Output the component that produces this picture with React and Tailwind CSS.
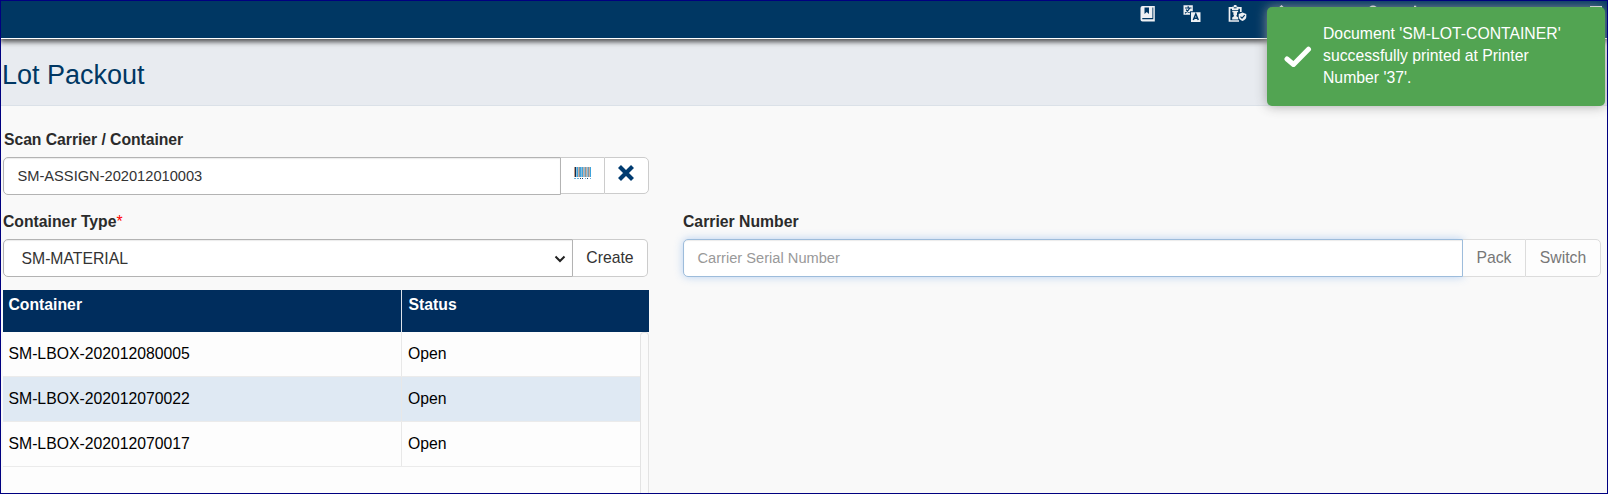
import React from "react";

const rows = [
  { id: "SM-LBOX-202012080005", status: "Open" },
  { id: "SM-LBOX-202012070022", status: "Open", selected: true },
  { id: "SM-LBOX-202012070017", status: "Open" },
];

function BookIcon() {
  return (
    <svg width="16" height="17" viewBox="0 0 16 17" className="shrink-0">
      <path fill="#eef0f3" d="M2.500 1H14.800V16.500H2.500A2 2 0 0 1 .5 14.500V3A2 2 0 0 1 2.500 1z" />
      <path fill="#003763" d="M4.500 2.500v6.500l2.250-2L9 9V2.500zM2.300 13h10.200v1.200H2.300zM12.400 2.500h.9v11.700h-.9z" />
    </svg>
  );
}

function TranslateIcon() {
  return (
    <svg width="18" height="17" viewBox="0 0 18 17" className="shrink-0">
      <path fill="#eef0f3" d="M.500 .300h9.300v6H7v3.500H.500zM8 7.200h9.500V17H8z" />
      <path fill="none" stroke="#003763" strokeWidth="1.200" d="M2 3h6.500M5.200 1.300V3M2 8.200c2-1.300 3.400-2.700 4.600-5M3.200 4.600c.8 1.500 2 2.500 3.400 3.200" />
      <path fill="none" stroke="#003763" strokeWidth="1.500" d="M10.300 15l2.500-6 2.500 6M11.200 13.200h3.200" />
    </svg>
  );
}

function BadgeIcon() {
  return (
    <svg width="19" height="17" viewBox="0 0 19 17" className="shrink-0">
      <path fill="none" stroke="#eef0f3" strokeWidth="1.700" d="M11 16H1.500V2.800H12.800V7" />
      <path fill="#eef0f3" d="M4 1.800h1.700V.800A1 1 0 0 1 6.600 0h1.200a1 1 0 0 1 .9.800v1h1.700V5H4z" />
      <path fill="#003763" d="M5.800 2.300h2.800v1H5.800z" />
      <path fill="#eef0f3" d="M4.300 5.700h5.800v1.500H9v2.600l-.8 1.200 2 1.400v2.200H4.200v-2.200l2-1.400-.8-1.200V7.200H4.300z" />
      <path fill="#eef0f3" d="M14.500 7.600l3.800 1.400v2.700c0 2-1.600 3.500-3.800 4.300-2.200-.8-3.800-2.300-3.800-4.300V9z" />
      <path fill="none" stroke="#003763" strokeWidth="1.200" d="M12.500 11.600l1.500 1.500 2.700-2.900" />
    </svg>
  );
}

function HomeIcon() {
  return (
    <svg width="16" height="17" viewBox="0 0 16 17" className="shrink-0">
      <path fill="#eef0f3" d="M7.500 0L15 7v9H9.500v-5h-4v5H0V7z" />
    </svg>
  );
}

function UserIcon() {
  return (
    <svg width="16" height="17" viewBox="0 0 16 17" className="shrink-0">
      <circle cx="8" cy="5" r="4.600" fill="#eef0f3" />
      <path fill="#eef0f3" d="M1 17c0-5 3-7 7-7s7 2 7 7z" />
    </svg>
  );
}

function BellIcon() {
  return (
    <svg width="16" height="17" viewBox="0 0 16 17" className="shrink-0">
      <path fill="#eef0f3" d="M7 .700h2.200v2c3 .600 4 3 4 5.500 0 2.500.800 3.500 1.800 4.500H1c1-1 1.800-2 1.800-4.500C2.800 5.700 4 3.300 7 2.700zM6 14h4a2 2 0 0 1-4 0z" />
    </svg>
  );
}

function WindowIcon() {
  return (
    <svg width="12" height="16" viewBox="0 0 12 16" className="shrink-0">
      <path fill="none" stroke="#eef0f3" strokeWidth="1.500" d="M.750 1.750h10.500v13.500H.750z" />
    </svg>
  );
}

function BarcodeIcon() {
  return (
    <svg width="17" height="13" viewBox="0 0 17 13" shapeRendering="crispEdges" className="shrink-0">
      <path fill="#86bfe0" d="M0 0h17v10H0z" />
      <path fill="#c99a80" d="M0 0h1v10H0z" />
      <path fill="#0f2f52" d="M1 0h1v10H1z" />
      <path fill="#cfae9c" d="M4 0h1v10H4zM9 0h1v10H9zM12 0h1v10h-1zM15 0h1v10h-1z" />
      <path fill="#3ea3dc" d="M3 0h1v10H3zM6 0h1v10H6zM8 0h1v10H8zM16 0h1v10h-1z" />
      <path fill="#7f959f" d="M5 0h1v10H5zM11 0h1v10h-1zM14 0h1v10h-1z" />
      <path fill="#6fb3dc" d="M0 11h2v1H0zM3 11h2v1H3zM11 11h1v1h-1zM16 11h1v1h-1z" />
      <path fill="#23486b" d="M6 11h1v1H6zM8 11h1v1H8zM13 11h1v1h-1z" />
    </svg>
  );
}

function Label({ children }) {
  return <div className="text-[15.75px] leading-[22px] font-bold text-[#2b2b2b]">{children}</div>;
}

export default function App() {
  return (
    <div className="relative flex h-[494px] w-[1608px] flex-col overflow-hidden border border-[#000080] bg-[#f9f9f9] font-['Liberation_Sans',Arial,sans-serif] text-[15.75px] text-[#333]">
      <header className="relative z-10 flex h-[38px] shrink-0 items-start border-b border-white bg-[#003763] pt-[4px] pl-[1139px] shadow-[0_2px_5px_1px_rgba(0,0,0,0.65)]">
        <div className="flex gap-[27px]">
          <BookIcon />
          <TranslateIcon />
          <BadgeIcon />
          <HomeIcon />
        </div>
        <div className="ml-[75px] flex gap-[26px]">
          <UserIcon />
          <BellIcon />
        </div>
        <div className="ml-[167px] flex"><WindowIcon /></div>
      </header>
      <div className="h-[67px] shrink-0 border-b border-[#dbe1e8] bg-[#e8ebf0] pt-[21px] pl-px text-[27px] leading-[31px] text-[#003763]">
        Lot Packout
      </div>

      <main className="flex min-h-0 flex-1 pl-[2px]">
        <section className="flex w-[646px] shrink-0 flex-col">
          <div className="pt-[23px] pl-px tracking-[-0.05px]"><Label>Scan Carrier / Container</Label></div>
          <div className="mt-[6px] flex h-[38px] items-start">
            <div className="flex h-[38px] w-[558px] items-center rounded-l-[5px] border border-[#b3b3b3] bg-white pt-px pl-[13.5px] text-[14.65px] shadow-[inset_0_1px_1px_rgba(0,0,0,0.08)]">
              SM-ASSIGN-202012010003
            </div>
            <button className="flex h-[37px] w-[43px] justify-center border-y border-[#ccc] bg-white pt-[9px]"><BarcodeIcon /></button>
            <button className="flex h-[37px] w-[45px] justify-center rounded-r-[5px] border border-[#ccc] bg-white pt-[7px] pr-px">
              <svg width="16" height="16" viewBox="0 0 16 16"><path stroke="#003b70" strokeWidth="4.200" d="M1.500 1.500l13 13M14.500 1.500l-13 13" /></svg>
            </button>
          </div>

          <div className="mt-[16px]"><Label>Container Type<span className="font-normal text-[#ff0000]">*</span></Label></div>
          <div className="mt-[6px] flex h-[38px]">
            <div className="flex w-[570px] items-center justify-between rounded-l-[5px] border border-[#b3b3b3] bg-white pt-px pr-[6px] pl-[17.5px] shadow-[inset_0_1px_1px_rgba(0,0,0,0.08)]">
              SM-MATERIAL
              <svg width="12" height="8" viewBox="0 0 12 8"><path fill="none" stroke="#222" strokeWidth="2" d="M1.500 1.500L6 6l4.500-4.500" /></svg>
            </div>
            <button className="w-[75px] rounded-r-[5px] border border-l-0 border-[#ccc] bg-white">Create</button>
          </div>

          <div className="mt-[13px] flex h-[42px] w-[646px] shrink-0 bg-[#002d5d] font-bold leading-[18px] text-white">
            <div className="w-[399px] border-r border-[#dde3ea] pt-[6px] pl-[5.5px]">Container</div>
            <div className="pt-[6px] pl-[6.5px]">Status</div>
          </div>
          <div className="flex min-h-0 flex-1 text-black">
            <div className="w-[638px] bg-[#fdfdfd]">
              {rows.map((row) => (
                <div key={row.id} className={`flex h-[45px] border-b border-[#ebebeb] leading-[43px] ${row.selected ? "bg-[#dfe9f3]" : ""}`}>
                  <div className="w-[399px] border-r border-[#e8e8e8] pl-[5.5px]">{row.id}</div>
                  <div className="pl-[6px]">{row.status}</div>
                </div>
              ))}
            </div>
            <div className="w-[9px] rounded-t-[4px] border border-b-0 border-[#e3e3e3] bg-[#fafafa]" />
          </div>
        </section>

        <section className="ml-[34px] w-[918px] pt-[105px]">
          <Label>Carrier Number</Label>
          <div className="mt-[6px] flex h-[38px]">
            <div className="flex w-[780px] items-center rounded-l-[5px] border border-[#9dbcdb] bg-white pt-px pl-[13.5px] text-[14.65px] text-[#999] shadow-[inset_0_1px_1px_rgba(0,0,0,0.08),0_0_8px_rgba(102,160,233,0.45)]">
              Carrier Serial Number
            </div>
            <button className="w-[62px] border-y border-[#dcdcdc] bg-[#fdfdfd] text-[#777]">Pack</button>
            <button className="w-[76px] rounded-r-[5px] border border-[#dcdcdc] bg-[#fdfdfd] text-[#777]">Switch</button>
          </div>
        </section>
      </main>

      <div className="absolute top-[6px] left-[1266px] z-20 flex h-[99px] w-[338px] items-start rounded-[5px] bg-[#52a452] pt-[16px] text-white shadow-[0_0_12px_rgba(153,153,153,0.9)]">
        <svg width="28" height="22" viewBox="0 0 28 22" className="mt-[23px] ml-[17px] shrink-0"><path fill="none" stroke="#fff" strokeWidth="5" strokeLinejoin="round" strokeLinecap="round" d="M3 13l6.500 5.500L24.500 3.200" /></svg>
        <div className="ml-[11px] w-[250px] leading-[22px]">Document 'SM-LOT-CONTAINER' successfully printed at Printer Number '37'.</div>
      </div>
    </div>
  );
}
